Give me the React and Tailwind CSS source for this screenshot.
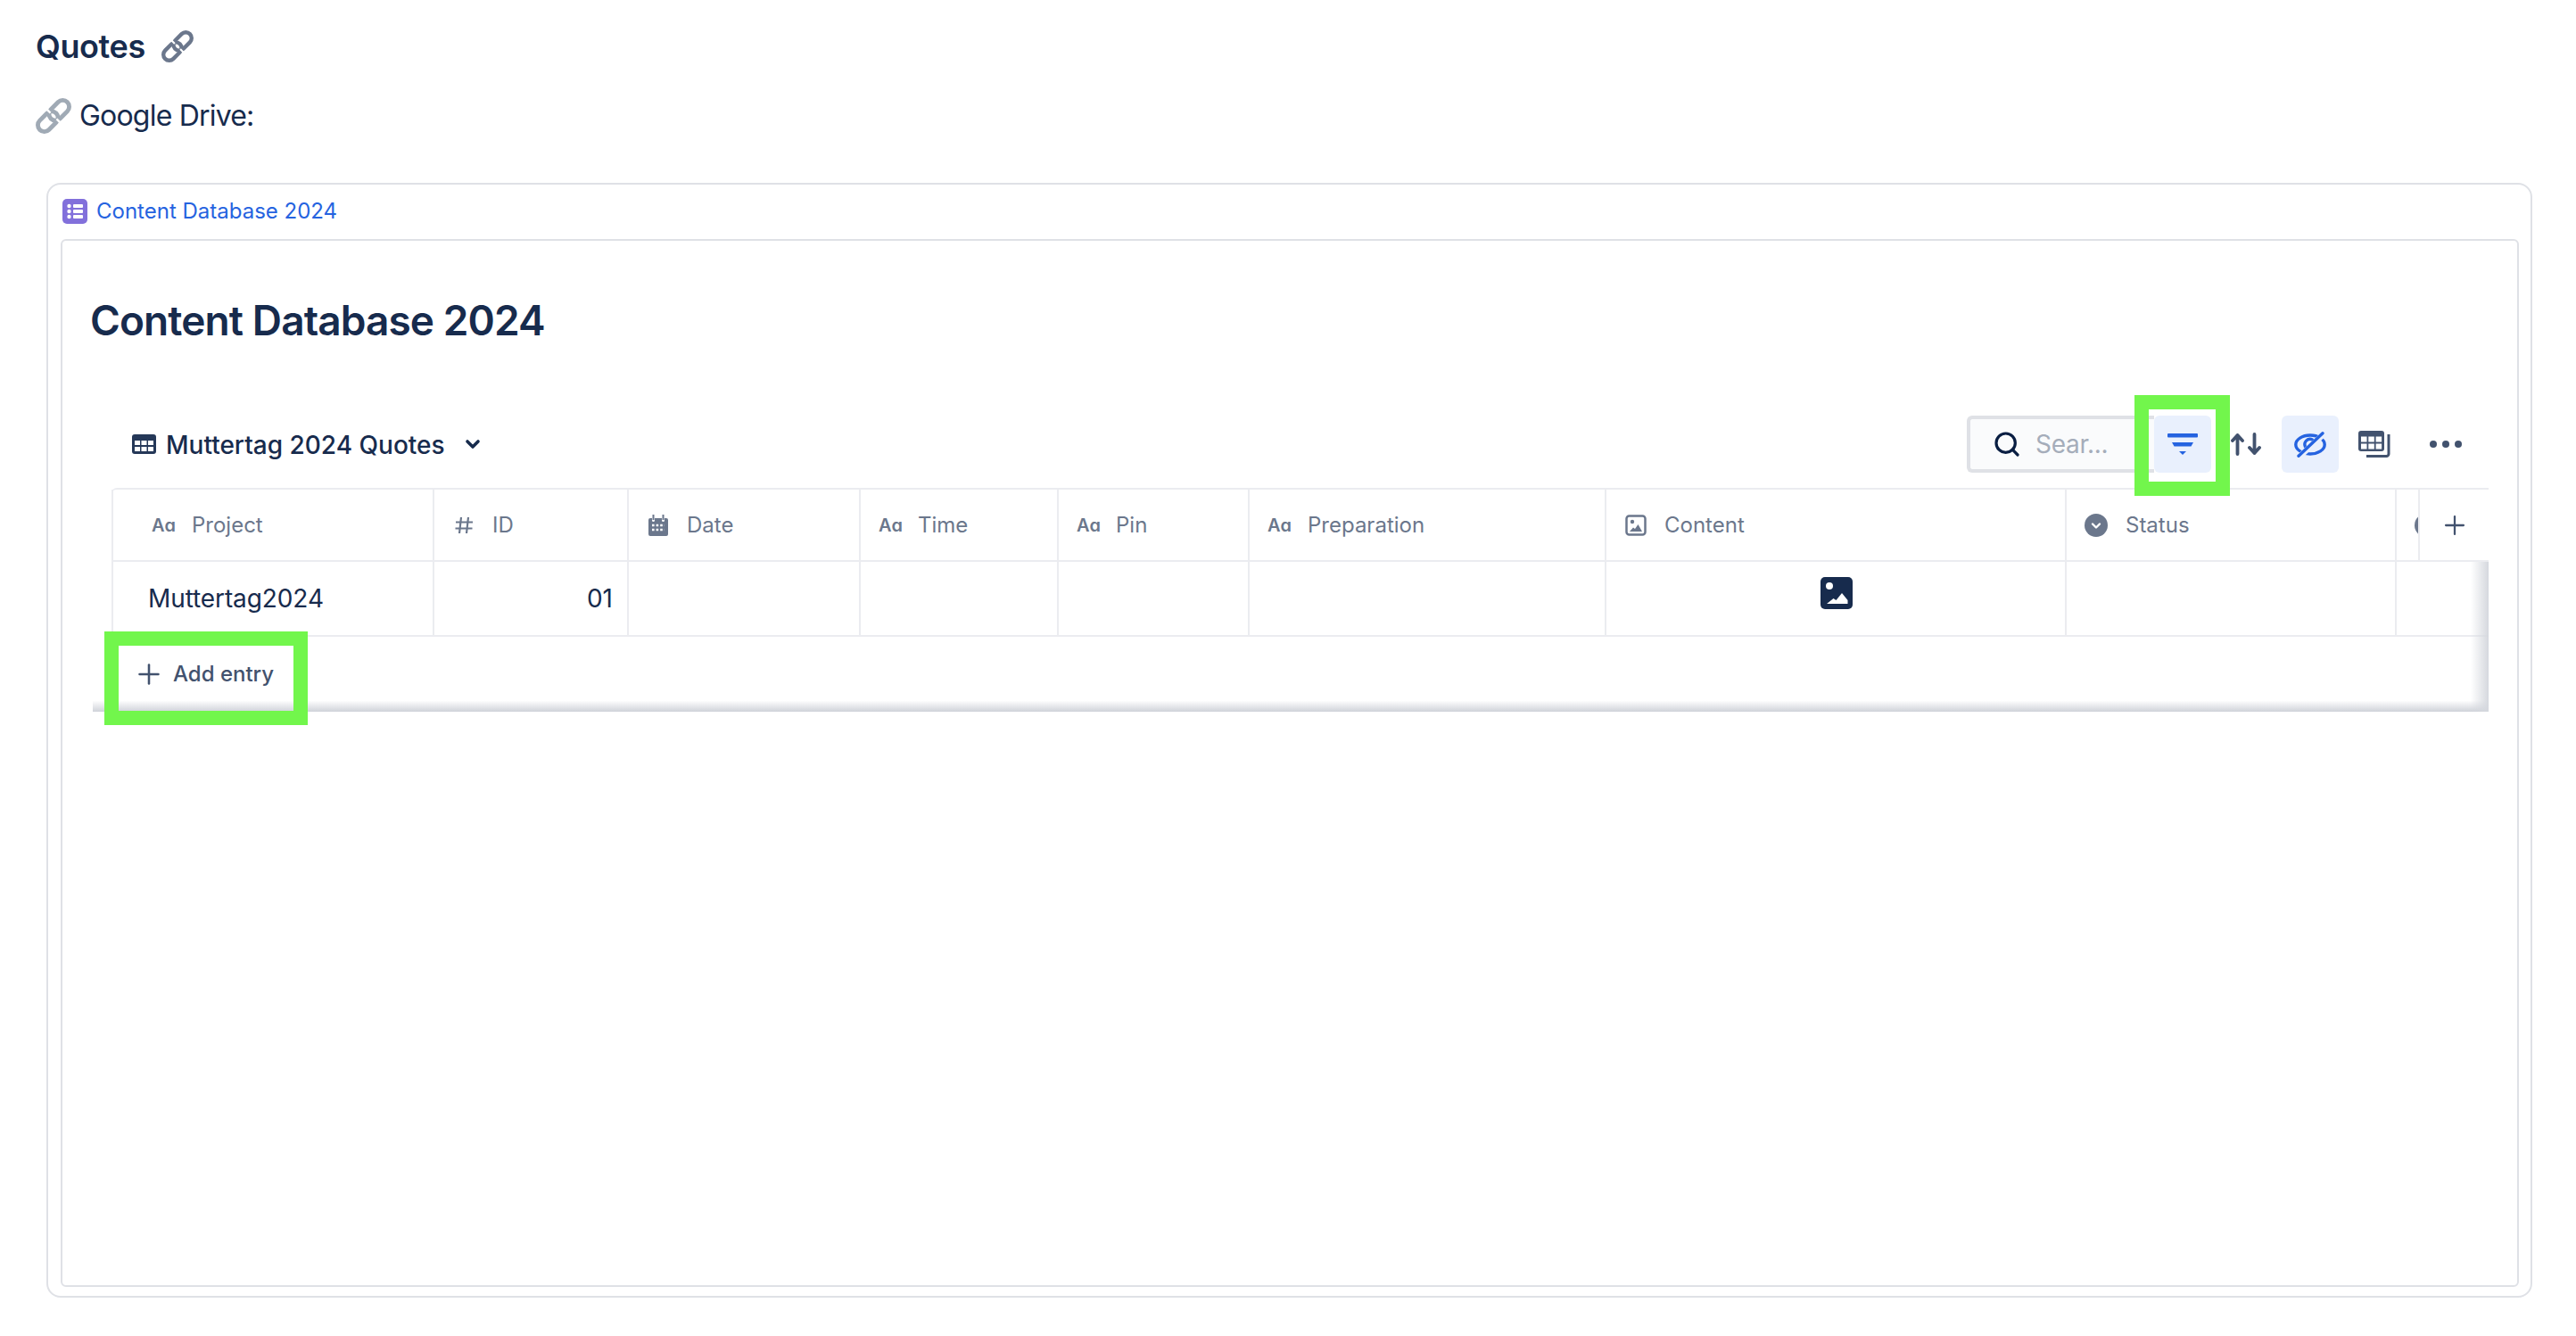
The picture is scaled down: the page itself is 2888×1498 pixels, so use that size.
import { ChevronDown, Plus, Search } from "lucide-react";

const font = "font-['Inter','Liberation_Sans',sans-serif]";

const LinkIcon = ({ className }) => (
  <svg viewBox="3.5 3.5 33 33" fill="none" stroke="currentColor" strokeWidth="4" className={className}>
    <g transform="rotate(-45 20 20)">
      <rect x="2" y="14" width="21.500" height="12" rx="6" />
      <rect x="16.500" y="14" width="21.500" height="12" rx="6" />
      <path d="M20 11v5M20 24v5" stroke="#fff" strokeWidth="2" />
    </g>
  </svg>
);

const TextIcon = () => <span className="w-[26px] text-[20px] font-semibold text-[#6b778c]">Aɑ</span>;

const HashIcon = () => (
  <svg viewBox="0 0 22 22" fill="none" stroke="#6b778c" strokeWidth="2.2" className="w-[22px] h-[22px]">
    <path d="M8 2 6 20M16 2l-2 18M2 7.5h19M1.5 14.500h19" />
  </svg>
);

const CalendarIcon = () => (
  <svg viewBox="0 0 24 24" className="w-[24px] h-[24px]">
    <path fill="#6b778c" d="M3 4h2v2.500a1.500 1.500 0 0 0 3 0V4h8v2.500a1.500 1.500 0 0 0 3 0V4h2a2 2 0 0 1 2 2v16a2 2 0 0 1-2 2H3a2 2 0 0 1-2-2V6a2 2 0 0 1 2-2z" />
    <path stroke="#6b778c" strokeWidth="2" d="M6.500 0v6M17.500 0v6" />
    <path stroke="#fff" strokeWidth="2.600" strokeDasharray="2.600 2" d="M5 12h14M5 17h14" />
  </svg>
);

const ImageOutlineIcon = () => (
  <svg viewBox="0 0 24 24" className="w-[24px] h-[24px]">
    <rect x="1.500" y="1.500" width="21" height="21" rx="3" fill="none" stroke="#6b778c" strokeWidth="2.500" />
    <circle cx="8" cy="8" r="2.200" fill="#6b778c" />
    <path fill="#6b778c" d="M5 19l4-4.500 2 1.500 3.500-5L19 19z" />
  </svg>
);

const StatusIcon = () => (
  <svg viewBox="0 0 26 26" className="w-[26px] h-[26px]">
    <circle cx="13" cy="13" r="13" fill="#6b778c" />
    <path d="M9 11.500l4 4 4-4" fill="none" stroke="#fff" strokeWidth="2.400" strokeLinecap="round" strokeLinejoin="round" />
  </svg>
);

const columns = [
  { w: "w-[362px]", label: "Project", icon: <TextIcon />, pl: "pl-[43px]", gap: "gap-[19px]" },
  { w: "w-[218px]", label: "ID", icon: <HashIcon />, pl: "pl-[22px]", gap: "gap-[21px]" },
  { w: "w-[260px]", label: "Date", icon: <CalendarIcon />, pl: "pl-[21px]", gap: "gap-[20px]" },
  { w: "w-[222px]", label: "Time", icon: <TextIcon />, pl: "pl-[20px]", gap: "gap-[18px]" },
  { w: "w-[214px]", label: "Pin", icon: <TextIcon />, pl: "pl-[20px]", gap: "gap-[18px]" },
  { w: "w-[400px]", label: "Preparation", icon: <TextIcon />, pl: "pl-[20px]", gap: "gap-[19px]" },
  { w: "w-[516px]", label: "Content", icon: <ImageOutlineIcon />, pl: "pl-[21px]", gap: "gap-[20px]" },
  { w: "w-[370px]", label: "Status", icon: <StatusIcon />, pl: "pl-[20px]", gap: "gap-[20px]" },
];

function Toolbar() {
  return (
    <div className="flex items-center h-[64px] ml-[78px] mr-[62px]">
      <svg viewBox="0 0 27 22" className="w-[27px] h-[22px] shrink-0">
        <rect width="27" height="22" rx="3" fill="#253858" />
        <g fill="#fff">
          <rect x="3" y="7" width="6" height="5" />
          <rect x="10.500" y="7" width="6" height="5" />
          <rect x="18" y="7" width="6" height="5" />
          <rect x="3" y="14" width="6" height="5" />
          <rect x="10.500" y="14" width="6" height="5" />
          <rect x="18" y="14" width="6" height="5" />
        </g>
      </svg>
      <span className="ml-[11px] mt-[2px] text-[28px] font-medium text-[#172b4d]">Muttertag 2024 Quotes</span>
      <ChevronDown className="ml-[19px] w-[24px] h-[24px] text-[#172b4d]" strokeWidth={3.6} />

      <div className="ml-auto flex items-center">
        <div className="w-[210px] h-[64px] flex items-center pl-[25px] rounded-l-[6px] border-[4px] border-r-0 border-[#dfe1e6] bg-[#fafbfc]">
          <Search className="w-[32px] h-[32px] text-[#091e42] shrink-0" strokeWidth={2.4} />
          <span className="ml-[16px] text-[28px] tracking-[-0.3px] text-[#a5adba]">Sear...</span>
        </div>
        <div className="w-[64px] h-[64px] flex items-center justify-center rounded-[6px] bg-[#e9f0fd]">
          <svg viewBox="0 0 34 24" className="w-[34px] h-[24px]" fill="#2563e0">
            <rect width="34" height="4.500" rx="1" />
            <path d="M5 10h24l-2.500 4.500h-19z" />
            <path d="M13 20h8l-4 4z" />
          </svg>
        </div>
        <svg viewBox="0 0 34 26" className="ml-[22px] w-[34px] h-[26px]" fill="none" stroke="#42526e" strokeWidth="3.800" strokeLinecap="round" strokeLinejoin="round">
          <path d="M7.500 24V3M2 9l5.500-6L13 9" />
          <path d="M26.500 2v21M21 17l5.500 6 5.500-6" />
        </svg>
        <div className="ml-[23px] w-[64px] h-[64px] flex items-center justify-center rounded-[6px] bg-[#e9f0fd]">
          <svg viewBox="0 0 36 29" className="w-[36px] h-[29px]" fill="none" stroke="#2563e0" strokeWidth="3.400" strokeLinecap="round">
            <ellipse cx="18" cy="14.500" rx="16.200" ry="10.500" />
            <path d="M12.500 17a6 6 0 0 1 8-8" />
            <path d="M34 2 5 29" stroke="#e9f0fd" strokeWidth="6.500" />
            <path d="M32 1.800 5 27.300" />
          </svg>
        </div>
        <svg viewBox="0 0 36 30" className="ml-[22px] w-[36px] h-[30px]">
          <rect width="29" height="23" rx="3" fill="#42526e" />
          <g fill="#fff">
            <rect x="3" y="6.500" width="6.500" height="6" />
            <rect x="11.300" y="6.500" width="6.500" height="6" />
            <rect x="19.600" y="6.500" width="6.500" height="6" />
            <rect x="3" y="14.500" width="6.500" height="6" />
            <rect x="11.300" y="14.500" width="6.500" height="6" />
            <rect x="19.600" y="14.500" width="6.500" height="6" />
          </g>
          <path d="M34 4v22a2.500 2.500 0 0 1-2.500 2.500H9" fill="none" stroke="#42526e" strokeWidth="3" />
        </svg>
        <svg viewBox="0 0 36 8" className="ml-[44px] w-[36px] h-[8px]" fill="#42526e">
          <circle cx="4" cy="4" r="4" />
          <circle cx="18" cy="4" r="4" />
          <circle cx="32" cy="4" r="4" />
        </svg>
      </div>
    </div>
  );
}

function DataTable() {
  return (
    <div className="relative mt-[17px] ml-[34px] w-[2686px]">
      <div className="ml-[21px] border-t-2 border-[#ebecf0] rounded-tl-[6px]">
        <div className="flex h-[81px] border-b-2 border-[#ebecf0]">
          {columns.map((c, i) => (
            <div key={c.label} className={`${c.w} shrink-0 flex items-center ${c.pl} ${c.gap} ${i === 0 ? "border-l-2" : ""} border-r-2 border-[#ebecf0]`}>
              {c.icon}
              <span className="text-[24px] text-[#6b778c]">{c.label}</span>
            </div>
          ))}
          <div className="w-[26px] shrink-0 overflow-hidden border-r-2 border-[#ebecf0] flex items-center pl-[20px]">
            <div className="w-[26px] h-[26px] shrink-0 rounded-full bg-[#6b778c]" />
          </div>
          <div className="w-[77px] shrink-0 flex items-center justify-center">
            <Plus className="w-[34px] h-[34px] text-[#42526e]" strokeWidth={1.6} />
          </div>
        </div>
        <div className="flex h-[84px] border-b-2 border-[#ebecf0] text-[28px] text-[#172b4d]">
          <div className="w-[362px] shrink-0 flex items-center pl-[39px] border-l-2 border-r-2 border-[#ebecf0] tracking-[-0.1px]">Muttertag2024</div>
          <div className="w-[218px] shrink-0 flex items-center justify-end pr-[16px] border-r-2 border-[#ebecf0]">01</div>
          <div className="w-[260px] shrink-0 border-r-2 border-[#ebecf0]" />
          <div className="w-[222px] shrink-0 border-r-2 border-[#ebecf0]" />
          <div className="w-[214px] shrink-0 border-r-2 border-[#ebecf0]" />
          <div className="w-[400px] shrink-0 border-r-2 border-[#ebecf0]" />
          <div className="w-[516px] shrink-0 flex justify-center pl-[2px] pt-[17px] border-r-2 border-[#ebecf0]">
            <svg viewBox="0 0 36 36" className="w-[36px] h-[36px]">
              <rect width="36" height="36" rx="5" fill="#172b4d" />
              <circle cx="10" cy="10" r="4" fill="#fff" />
              <path fill="#fff" d="M7 30l7.500-6 3 2 6.500-8 6.500 8v4z" />
            </svg>
          </div>
          <div className="w-[370px] shrink-0 border-r-2 border-[#ebecf0]" />
        </div>
      </div>
      <div className="h-[84px] flex items-center pl-[45px] gap-[9px] bg-gradient-to-b from-white from-[85%] to-[#cfd2d9] text-[#42526e]">
        <Plus className="w-[36px] h-[36px]" strokeWidth={1.7} />
        <span className="text-[24px] font-medium">Add entry</span>
      </div>
      <div className="absolute right-0 top-[83px] bottom-0 w-[20px] bg-gradient-to-r from-transparent to-[#d5d8de]" />
    </div>
  );
}

export default function App() {
  return (
    <div className={`relative min-h-[1498px] bg-white pt-[32px] pl-[40px] text-[#172b4d] ${font}`}>
      <div className="flex items-center h-[40px] gap-[18px]">
        <h2 className="text-[36px] font-semibold leading-[40px] tracking-[-0.4px]">Quotes</h2>
        <LinkIcon className="w-[36px] h-[36px] text-[#6b778c]" />
      </div>
      <div className="flex items-center h-[40px] mt-[38px] gap-[9px]">
        <LinkIcon className="w-[40px] h-[40px] text-[#a0aab5]" />
        <span className="text-[32px] tracking-[-0.8px]">Google Drive:</span>
      </div>

      <div className="mt-[55px] ml-[12px] w-[2787px] h-[1250px] flex flex-col rounded-[16px] border-2 border-[#dfe1e6] pl-[14px] pr-[13px] pb-[10px]">
        <div className="flex items-center h-[61px] pl-[2px] pb-[1px] gap-[10px]">
          <svg viewBox="0 0 28 28" className="w-[28px] h-[28px] shrink-0">
            <rect width="28" height="28" rx="5" fill="#8270db" />
            <g fill="#fff">
              <circle cx="7.500" cy="8" r="2.200" />
              <circle cx="7.500" cy="14" r="2.200" />
              <circle cx="7.500" cy="20" r="2.200" />
              <rect x="12" y="6" width="11" height="4" rx="1" />
              <rect x="12" y="12" width="11" height="4" rx="1" />
              <rect x="12" y="18" width="11" height="4" rx="1" />
            </g>
          </svg>
          <span className="text-[24px] text-[#2563e0]">Content Database 2024</span>
        </div>
        <div className="flex-1 rounded-[6px] border-2 border-[#dfe1e6]">
          <h1 className="mt-[61px] ml-[31px] text-[46px] leading-[56px] font-semibold tracking-[-0.9px]">Content Database 2024</h1>
          <div className="mt-[79px]">
            <Toolbar />
          </div>
          <DataTable />
        </div>
      </div>

      {/* green highlights drawn on top of the screenshot */}
      <div className="absolute left-[117px] top-[708px] w-[228px] h-[105px] border-[16px] border-[#72f64c]" />
      <div className="absolute left-[2393px] top-[443px] w-[107px] h-[113px] border-[16px] border-[#72f64c]" />
    </div>
  );
}
